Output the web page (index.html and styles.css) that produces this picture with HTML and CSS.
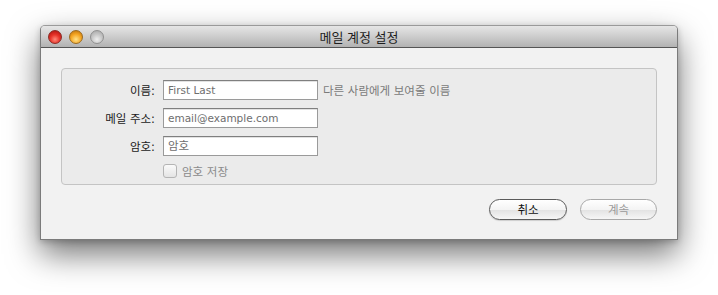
FILE: index.html
```html
<!DOCTYPE html>
<html lang="ko">
<head>
<meta charset="utf-8">
<title>메일 계정 설정</title>
<link rel="stylesheet" href="styles.css">
</head>
<body>
<div class="window">
  <div class="titlebar">
    <div class="lights">
      <span class="light red"></span>
      <span class="light yellow"></span>
      <span class="light grey"></span>
    </div>
    <div class="title">메일 계정 설정</div>
  </div>
  <div class="content">
    <div class="group">
      <div class="row">
        <label class="label">이름:</label>
        <div class="field placeholder">First Last</div>
        <span class="hint">다른 사람에게 보여줄 이름</span>
      </div>
      <div class="row">
        <label class="label">메일 주소:</label>
        <div class="field placeholder">email@example.com</div>
      </div>
      <div class="row">
        <label class="label">암호:</label>
        <div class="field placeholder ko">암호</div>
      </div>
      <div class="row check-row">
        <span class="label"></span>
        <span class="checkbox"></span>
        <span class="check-label">암호 저장</span>
      </div>
    </div>
    <div class="buttons">
      <button class="btn">취소</button>
      <button class="btn disabled">계속</button>
    </div>
  </div>
</div>
</body>
</html>
```

FILE: styles.css
```css
html, body {
  margin: 0;
  padding: 0;
  background: #ffffff;
}
body {
  width: 718px;
  height: 295px;
  overflow: hidden;
  padding: 25px 0 0 40px;
  box-sizing: border-box;
  font-family: "DejaVu Sans", "Noto Sans CJK KR", sans-serif;
  font-size: 11.5px;
  color: #1a1a1a;
}
.window {
  width: 638px;
  height: 215px;
  box-sizing: border-box;
  border: 1px solid #7b7b7b;
  border-top-color: #9a9a9a;
  border-radius: 5px 5px 0 0;
  background: #f2f2f2;
  box-shadow: 0 14px 32px rgba(0, 0, 0, 0.55), 0 2px 6px rgba(0, 0, 0, 0.2);
  display: flex;
  flex-direction: column;
}
.titlebar {
  height: 21px;
  flex: none;
  border-bottom: 1px solid #555555;
  border-radius: 4px 4px 0 0;
  background: linear-gradient(#e6e6e6 0%, #cfcfcf 45%, #b2b2b2 100%);
  display: flex;
  align-items: center;
  position: relative;
}
.lights {
  display: flex;
  gap: 7px;
  padding-left: 7px;
}
.light {
  width: 14px;
  height: 14px;
  border-radius: 50%;
  box-sizing: border-box;
  display: block;
}
.red {
  background: radial-gradient(circle at 50% 70%, #ff8a7a 0%, #e8342a 45%, #a80e0a 100%);
  border: 1px solid #8a2a24;
}
.yellow {
  background: radial-gradient(circle at 50% 70%, #ffe28a 0%, #f5a623 50%, #b86a08 100%);
  border: 1px solid #9a6a20;
}
.grey {
  background: radial-gradient(circle at 50% 70%, #eeeeee 0%, #c6c6c6 50%, #a2a2a2 100%);
  border: 1px solid #909090;
}
.title {
  position: absolute;
  left: 0;
  right: 0;
  top: 0;
  bottom: 0;
  text-align: center;
  line-height: 21px;
  font-family: "Noto Sans CJK KR", sans-serif;
  font-size: 13px;
  color: #1e1e1e;
  pointer-events: none;
}
.content {
  padding: 20px 20px 0 20px;
  flex: 1;
  display: flex;
  flex-direction: column;
}
.group {
  height: 117px;
  box-sizing: border-box;
  border: 1px solid #c4c4c4;
  border-radius: 4px;
  background: #ebebeb;
  padding-top: 11px;
  display: flex;
  flex-direction: column;
  gap: 8px;
}
.row {
  display: flex;
  align-items: center;
  height: 20px;
}
.label {
  width: 93px;
  text-align: right;
  margin-right: 8px;
  flex: none;
  color: #1a1a1a;
}
.field {
  width: 155px;
  height: 20px;
  box-sizing: border-box;
  border: 1px solid #9a9a9a;
  border-top-color: #7f7f7f;
  background: #ffffff;
  padding: 0 4px;
  line-height: 18px;
  font-size: 10.5px;
  box-shadow: inset 0 1px 0 #e2e2e2;
}
.field.ko {
  font-size: 11.5px;
}
.placeholder {
  color: #6e6e6e;
}
.hint {
  margin-left: 5px;
  color: #7a7a7a;
}
.check-row {
  margin-top: -1px;
  height: 16px;
}
.checkbox {
  width: 14px;
  height: 14px;
  box-sizing: border-box;
  border: 1px solid #b4b4b4;
  border-radius: 3px;
  background: linear-gradient(#fafafa, #e4e4e4);
  margin-right: 5px;
}
.check-label {
  color: #8a8a8a;
}
.buttons {
  display: flex;
  justify-content: flex-end;
  gap: 13px;
  margin-top: 14px;
}
.btn {
  width: 78px;
  height: 21px;
  box-sizing: border-box;
  border: 1px solid #5a5a5a;
  border-radius: 11px;
  background: linear-gradient(#ffffff 0%, #f4f4f4 50%, #e2e2e2 51%, #f6f6f6 100%);
  font-family: "Noto Sans CJK KR", sans-serif;
  font-size: 11.5px;
  color: #111111;
  padding: 0;
  line-height: 19px;
  box-shadow: 0 1px 1px rgba(0, 0, 0, 0.15);
}
.btn.disabled {
  width: 77px;
  border-color: #a8a8a8;
  color: #9a9a9a;
  box-shadow: none;
}
```
